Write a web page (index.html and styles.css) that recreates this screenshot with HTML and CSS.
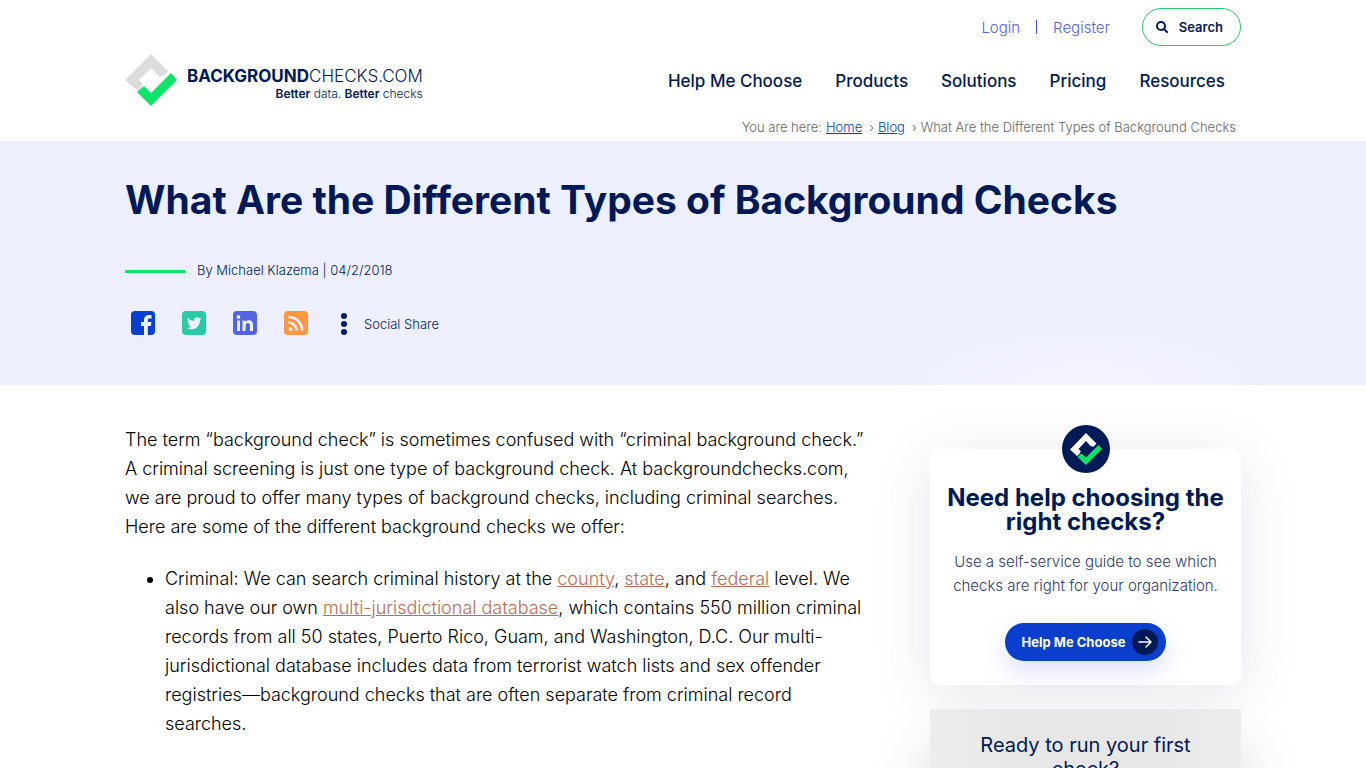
FILE: index.html
```
<!DOCTYPE html>
<html lang="en">
<head>
    <meta charset="UTF-8">
    <title>What Are the Different Types of Background Checks</title>
    <link rel="stylesheet" href="styles.css">
</head>
<body>
<header class="header">
    <div class="container header-inner">
        <a href="#" class="logo">
            <svg width="52" height="52" viewBox="0 0 52 52">
                <path fill="#dcdcdc" d="M26 0 43 17 38 22 37 21 35 23 26 14 14 26 18 30 16 32 17 33 13 37 0 26z"/>
                <path fill="#0ee467" d="M46 19 52 26 26 52 12 38 19 32 26 39z"/>
            </svg>
            <span class="logo-text">
                <span class="logo-name"><b>BACKGROUND</b>CHECKS.COM</span>
                <span class="logo-tag"><b>Better</b> data. <b>Better</b> checks</span>
            </span>
        </a>
        <div class="header-right">
            <div class="top-bar">
                <a href="#">Login</a>
                <span class="divider"></span>
                <a href="#">Register</a>
                <button type="button" class="search">
                    <svg width="12" height="12" viewBox="0 0 12 12" fill="none" stroke="#001a57" stroke-width="2" stroke-linecap="round">
                        <circle cx="5" cy="5" r="4"/>
                        <path d="M8 8l3 3"/>
                    </svg>
                    Search
                </button>
            </div>
            <nav class="nav">
                <a href="#">Help Me Choose</a>
                <a href="#">Products</a>
                <a href="#">Solutions</a>
                <a href="#">Pricing</a>
                <a href="#">Resources</a>
            </nav>
            <div class="breadcrumb">
                <span>You are here:</span>
                <a href="#">Home</a>
                <span class="sep">›</span>
                <a href="#">Blog</a>
                <span class="sep">›</span>
                <span>What Are the Different Types of Background Checks</span>
            </div>
        </div>
    </div>
</header>

<section class="hero">
    <div class="container">
        <h1>What Are the Different Types of Background Checks</h1>
        <p class="author">By Michael Klazema | 04/2/2018</p>
        <div class="social">
            <a href="#" aria-label="Facebook">
                <svg width="24" height="24" viewBox="0 0 24 24">
                    <rect width="24" height="24" rx="4" fill="#0540d2"/>
                    <path fill="#eef0ff" d="M13 24v-9h-3v-4h3V9c0-3.400 2-5 5-5h2.500v3.600h-2c-1.300 0-1.700.6-1.700 1.700V11h3.600l-.5 4h-3.100v9z"/>
                </svg>
            </a>
            <a href="#" aria-label="Twitter">
                <svg width="24" height="24" viewBox="0 0 24 24">
                    <rect width="24" height="24" rx="4" fill="#28cba3"/>
                    <path fill="#eef0ff" d="M19.500 7.600c-.5.300-1.100.4-1.700.5.600-.4 1.100-1 1.300-1.600-.6.300-1.200.6-1.900.7a3 3 0 0 0-5.200 2.700c-2.500-.1-4.700-1.300-6.200-3.100-.9 1.500-.4 3.200.9 4.100-.5 0-.9-.2-1.300-.4 0 1.500 1 2.700 2.400 3-.4.100-.9.100-1.300 0 .4 1.200 1.500 2.100 2.800 2.100A6 6 0 0 1 4.900 17c5.600 3.400 13.200.200 13.100-7.900.6-.4 1.100-.9 1.500-1.500z"/>
                </svg>
            </a>
            <a href="#" aria-label="LinkedIn">
                <svg width="24" height="24" viewBox="0 0 24 24">
                    <rect width="24" height="24" rx="4" fill="#5264e5"/>
                    <circle cx="5.500" cy="6" r="1.900" fill="#eef0ff"/>
                    <path fill="#eef0ff" d="M4 9.500h3V20H4zM9.500 9.500h3V11c.7-1.200 1.900-1.800 3.400-1.800 3 0 4.100 1.800 4.100 4.800v6h-3.100v-5.500c0-1.600-.5-2.500-1.900-2.500-1.500 0-2.400 1-2.400 2.600V20H9.500z"/>
                </svg>
            </a>
            <a href="#" aria-label="RSS">
                <svg width="24" height="24" viewBox="0 0 24 24">
                    <rect width="24" height="24" rx="4" fill="#ff983f"/>
                    <circle cx="6.500" cy="18" r="2" fill="#eef0ff"/>
                    <path fill="none" stroke="#eef0ff" stroke-width="2.600" d="M4.500 11.500a8 8 0 0 1 8 8M4.500 6a13.500 13.500 0 0 1 13.500 13.500"/>
                </svg>
            </a>
            <span class="share">
                <svg width="6" height="22" viewBox="0 0 6 22" fill="#001f6b">
                    <circle cx="3" cy="3" r="3"/>
                    <circle cx="3" cy="11" r="3"/>
                    <circle cx="3" cy="19" r="3"/>
                </svg>
                Social Share
            </span>
        </div>
    </div>
</section>

<div class="container content">
    <main class="article">
        <p>The term “background check” is sometimes confused with “criminal background check.”<br>
            A criminal screening is just one type of background check. At backgroundchecks.com,<br>
            we are proud to offer many types of background checks, including criminal searches.<br>
            Here are some of the different background checks we offer:</p>
        <ul>
            <li>Criminal: We can search criminal history at the <a href="#">county</a>, <a href="#">state</a>, and <a href="#">federal</a> level. We also have our own <a href="#">multi-jurisdictional database</a>, which contains 550 million criminal records from all 50 states, Puerto Rico, Guam, and Washington, D.C. Our multi-jurisdictional database includes data from terrorist watch lists and sex offender registries—background checks that are often separate from criminal record<br>
                searches.</li>
        </ul>
    </main>
    <aside class="sidebar">
        <div class="card">
            <svg class="badge" width="48" height="48" viewBox="0 0 48 48">
                <circle cx="24" cy="24" r="24" fill="#001a57"/>
                <path fill="#fff" d="M24 8 34.500 18.500 31 22 30 21 29 21.500 24 16 16.500 24 19 26.500 17.500 28 18 28.500 15 31 8 24.500z"/>
                <path fill="#0ee467" d="M36.500 20 40 24 24 40 15.500 32 19.500 28.500 24 32.500z"/>
            </svg>
            <h2>Need help choosing the right checks?</h2>
            <p>Use a self-service guide to see which checks are right for your organization.</p>
            <a href="#" class="btn">
                Help Me Choose
                <svg width="26" height="26" viewBox="0 0 26 26" fill="none">
                    <circle cx="13" cy="13" r="13" fill="#001a57"/>
                    <path stroke="#fff" stroke-width="1.500" stroke-linecap="round" stroke-linejoin="round" d="M7 13h12M14 8l5 5-5 5"/>
                </svg>
            </a>
        </div>
        <div class="promo">
            <h3>Ready to run your first check?</h3>
        </div>
    </aside>
</div>
</body>
</html>
```
FILE: styles.css
```
* {
    box-sizing: border-box;
}
body {
    margin: 0;
    height: 100vh;
    overflow: hidden;
    background: #fff;
    color: #000;
    font-family: Inter, "Liberation Sans", sans-serif;
    font-size: 18px;
    font-weight: 300;
    line-height: 29px;
}
h1, h2, h3, p, ul {
    margin: 0;
}
h1, h2, h3 {
    color: #001a57;
}
svg {
    display: block;
    flex: none;
}
.container {
    max-width: 1164px;
    margin: 0 auto;
    padding: 0 24px;
}

/* header */
.header-inner {
    display: flex;
    justify-content: space-between;
}
.logo {
    display: flex;
    align-items: center;
    align-self: flex-start;
    gap: 10px;
    margin-top: 54px;
    color: #001a57;
    text-decoration: none;
}
.logo-text {
    display: flex;
    flex-direction: column;
    align-items: flex-end;
    padding-top: 8px;
}
.logo-name {
    font-size: 17px;
    line-height: 20px;
}
.logo-name b {
    font-weight: 700;
}
.logo-tag {
    font-size: 12px;
    line-height: 16px;
}
.logo-tag b {
    font-weight: 600;
}
.header-right {
    display: flex;
    flex-direction: column;
    align-items: flex-end;
    padding-top: 8px;
}
.top-bar {
    display: flex;
    align-items: center;
    gap: 16px;
    font-size: 15px;
}
.top-bar a {
    color: #5264e5;
    text-decoration: none;
}
.divider {
    width: 1px;
    height: 14px;
    background: #3c50d8;
}
.search {
    display: flex;
    align-items: center;
    gap: 11px;
    height: 38px;
    margin-left: 16px;
    padding: 0 17px 0 13px;
    border: 1px solid #2bc870;
    border-radius: 19px;
    background: #fff;
    color: #001a57;
    font: 600 13px Inter, "Liberation Sans", sans-serif;
}
.nav {
    display: flex;
    gap: 33px;
    padding: 21px 16px 0 0;
    font-size: 17px;
    font-weight: 500;
}
.nav a {
    color: #001a57;
    text-decoration: none;
}
.breadcrumb {
    display: flex;
    gap: 4px;
    padding: 21px 5px 4px 0;
    color: #666;
    font-size: 13px;
    line-height: 20px;
}
.breadcrumb a {
    color: #0540b4;
}
.breadcrumb .sep {
    padding-left: 3px;
}

/* title block */
.hero {
    height: 244px;
    padding-top: 35px;
    background: radial-gradient(ellipse 210px 66px at calc(50% + 402px) 100%, #f4f4ff, #eeeffe) #eeeffe;
}
.hero h1 {
    font-size: 39px;
    font-weight: 700;
    line-height: 48px;
}
.author {
    display: flex;
    align-items: center;
    gap: 12px;
    margin-top: 36px;
    color: #001a57;
    font-size: 13px;
    line-height: 20px;
}
.author::before {
    content: "";
    width: 60px;
    height: 3px;
    margin-top: 2px;
    background: #0ee467;
}
.social {
    display: flex;
    gap: 27px;
    margin-top: 31px;
    padding-left: 6px;
}
.share {
    display: flex;
    align-items: center;
    gap: 17px;
    margin-left: 6px;
    color: #001a57;
    font-size: 13px;
    line-height: 26px;
}

/* article and sidebar */
.content {
    display: grid;
    grid-template-columns: minmax(0, 1fr) 311px;
    gap: 52px;
    padding-top: 40px;
}
.article ul {
    margin-top: 23px;
    padding-left: 40px;
}
.article a {
    color: #c36a55;
}
.card {
    position: relative;
    margin-top: 24px;
    padding: 37px 16px 24px;
    border-radius: 10px;
    background: #fff;
    box-shadow: 0 10px 60px rgba(0, 20, 60, 0.1);
    text-align: center;
}
.badge {
    position: absolute;
    top: -24px;
    left: calc(50% - 24px);
}
.card h2 {
    font-size: 24px;
    font-weight: 700;
    line-height: 24px;
}
.card p {
    margin-top: 16px;
    color: #2c3d70;
    font-size: 15px;
    line-height: 24px;
}
.btn {
    display: inline-flex;
    align-items: center;
    gap: 7px;
    height: 38px;
    margin-top: 25px;
    padding: 0 8px 0 17px;
    border-radius: 19px;
    background: #0a3fce;
    box-shadow: 0 10px 24px rgba(82, 100, 229, 0.2);
    color: #fff;
    font-size: 13px;
    font-weight: 700;
    text-decoration: none;
    vertical-align: top;
}
.promo {
    position: relative;
    margin-top: 24px;
    padding: 24px 40px 60px;
    background: linear-gradient(90deg, #ededed, #e7e7e7 30%, #e7e7e7 70%, #ededed);
    box-shadow: 0 40px 60px rgba(0, 0, 0, 0.16);
    text-align: center;
}
.promo h3 {
    font-size: 20px;
    font-weight: 400;
    line-height: 24px;
}
```
